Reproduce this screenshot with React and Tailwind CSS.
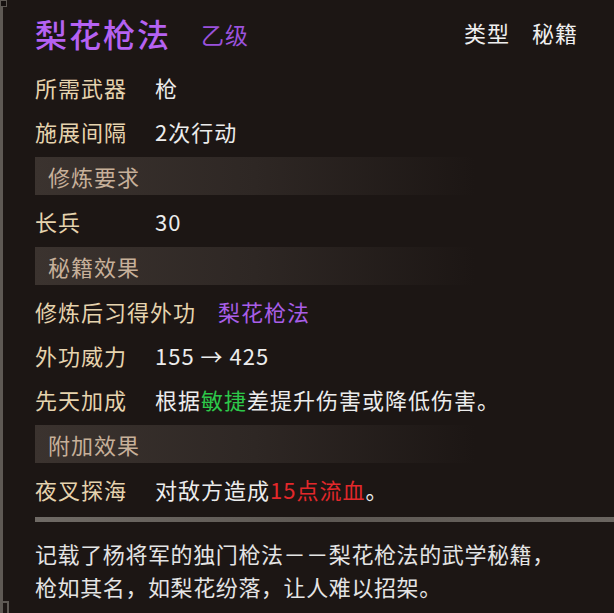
import React from "react";

const rows1 = [
  { label: "所需武器", value: "枪" },
  { label: "施展间隔", value: "2次行动" },
];

const Row = ({ label, children }) => (
  <div className="flex h-[44px] items-center whitespace-nowrap">
    <span className="min-w-[120px] shrink-0 text-[#e6d3ae]">{label}</span>
    <span className="text-[#ececec]">{children}</span>
  </div>
);

const SectionBar = ({ title }) => (
  <div className="my-[4px] flex h-[38px] w-[440px] items-center bg-gradient-to-r from-[#3b332f] via-[#2e2724] to-transparent pl-[13px] text-[#c7b09a]">
    {title}
  </div>
);

export default function App() {
  return (
    <div className="relative flex h-[613px] w-[614px] overflow-hidden bg-[#1c1614] font-['Noto_Sans_CJK_SC',sans-serif] text-[22px] tracking-[1px]">
      {/* left frame edge */}
      <div className="mt-[6px] w-[3px] shrink-0 bg-[#5e5954]" />
      <div className="absolute left-0 top-0 h-[7px] w-[7px] border border-[#5e5954] bg-[#15100f]" />
      <div className="absolute bottom-0 left-0 h-[12px] w-[9px] border-r-2 border-t-2 border-[#5e5954]" />

      <div className="flex flex-1 flex-col pl-[32px]">
        {/* title line */}
        <div className="flex h-[65px] items-center">
          <span className="text-[32px] font-medium leading-none tracking-[2px] text-[#b562f2]">梨花枪法</span>
          <span className="ml-[30px] pt-[4px] text-[23px] text-[#9a52dc]">乙级</span>
          <div className="ml-auto flex gap-[22px] pr-[36px] text-[22px] text-[#efefef]">
            <span>类型</span>
            <span>秘籍</span>
          </div>
        </div>

        {rows1.map((r) => (
          <Row key={r.label} label={r.label}>
            {r.value}
          </Row>
        ))}

        <SectionBar title="修炼要求" />
        <Row label="长兵">30</Row>

        <SectionBar title="秘籍效果" />
        <Row label="修炼后习得外功">
          <span className="ml-[22px] text-[#a85ee8]">梨花枪法</span>
        </Row>
        <Row label="外功威力">155 → 425</Row>
        <Row label="先天加成">
          根据<span className="text-[#2dc84a]">敏捷</span>差提升伤害或降低伤害。
        </Row>

        <SectionBar title="附加效果" />
        <Row label="夜叉探海">
          对敌方造成<span className="text-[#e3282b]">15点流血</span>。
        </Row>

        {/* divider */}
        <div className="mt-[6px] h-[5px] bg-gradient-to-r from-[#6f6a65] via-[#5d5853] to-[#6a6560]" />

        <div className="pt-[15px] leading-[33px] tracking-[0.6px] text-[#e4e4e4]">
          <p>记载了杨将军的独门枪法－－梨花枪法的武学秘籍，</p>
          <p>枪如其名，如梨花纷落，让人难以招架。</p>
        </div>
      </div>
    </div>
  );
}
